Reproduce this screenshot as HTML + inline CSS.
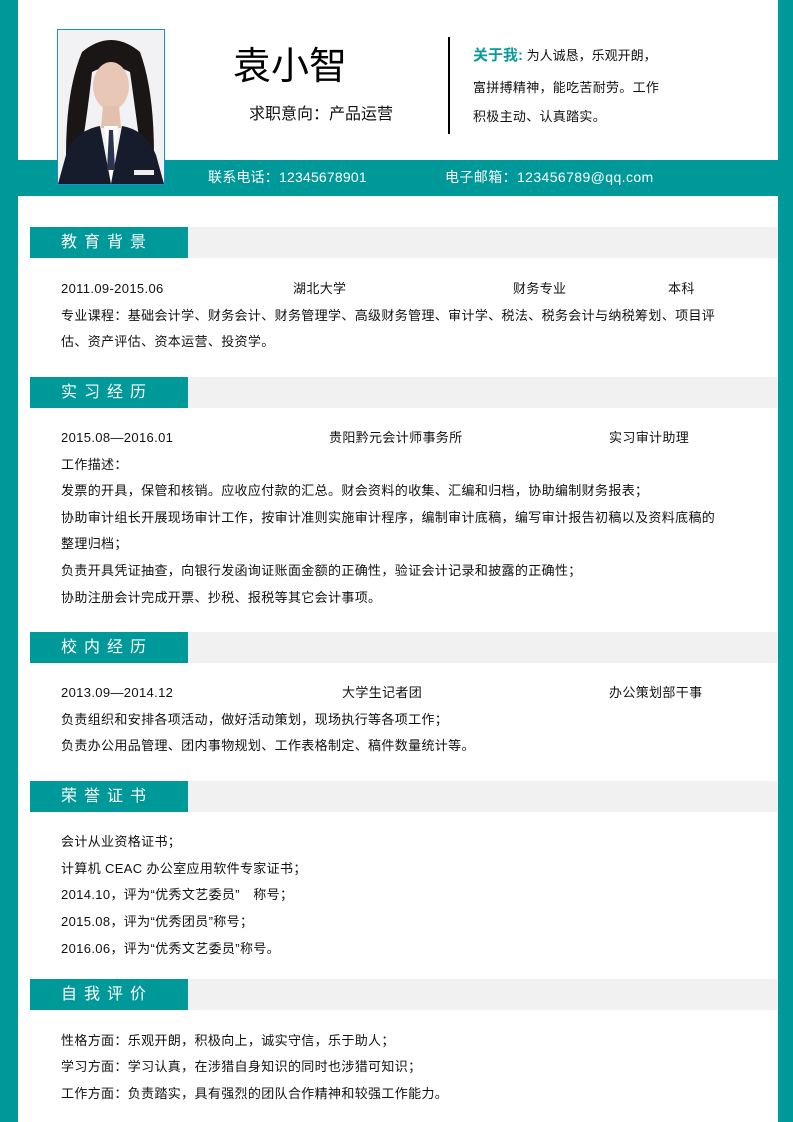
<!DOCTYPE html>
<html><head><meta charset="utf-8">
<style>
*{margin:0;padding:0;box-sizing:border-box}
body{width:793px;height:1122px;position:relative;background:#fff;font-family:"Liberation Sans","Noto Sans CJK SC",sans-serif;color:#111;overflow:hidden}
.a{position:absolute;white-space:nowrap}
.t{font-size:13px;line-height:18px;letter-spacing:0.35px}
.sec{position:absolute;left:30px;width:748px;height:31px;background:#f1f1f1}
.sec div{width:158px;height:31px;background:#009999;color:#fff;font-size:16px;line-height:31px;padding-left:31px;letter-spacing:7px}
</style></head><body>
<div class="a" style="left:0;top:0;width:18px;height:1122px;background:#009999"></div>
<div class="a" style="left:778px;top:0;width:15px;height:1122px;background:#009999"></div>
<div class="a" style="left:0;top:160px;width:793px;height:36px;background:#009999"></div>
<div class="a" style="left:57px;top:29px;width:108px;height:156px;border:1px solid #1a8fd0;background:#f2f2f4">
<svg width="106" height="154" viewBox="0 0 106 154"><path d="M24 22 Q53 -2 82 22 Q96 60 96 125 L84 130 Q76 70 72 42 Q53 32 34 42 Q30 80 22 130 L8 125 Q8 60 24 22Z" fill="#1b1616"/><ellipse cx="53" cy="56" rx="18" ry="24" fill="#e8c7b6"/><path d="M45 76 L61 76 L63 98 L43 98Z" fill="#e3bfae"/><path d="M8 125 Q18 100 42 96 L53 154 L64 96 Q88 100 98 125 L106 154 L0 154Z" fill="#161c2c"/><path d="M46 96 L53 152 L60 96Z" fill="#fff"/><path d="M51 100 L55 100 L57 140 L49 140Z" fill="#2a3550"/><rect x="76" y="140" width="20" height="5" fill="#eee"/></svg></div>
<div class="a" style="left:233px;top:42px;font-size:38px;line-height:50px;color:#000">袁小智</div>
<div class="a" style="left:249px;top:104px;font-size:16px;line-height:22px;color:#111">求职意向：产品运营</div>
<div class="a" style="left:448px;top:37px;width:2px;height:97px;background:#000"></div>
<div class="a" style="left:473px;top:46px;font-size:13px;line-height:20px"><span style="color:#0b9a9a;font-size:15px;font-weight:bold">关于我:</span> 为人诚恳，乐观开朗，</div>
<div class="a" style="left:473px;top:78px;font-size:13px;line-height:20px;letter-spacing:0.3px">富拼搏精神，能吃苦耐劳。工作</div>
<div class="a" style="left:473px;top:107px;font-size:13px;line-height:20px;letter-spacing:0.3px">积极主动、认真踏实。</div>
<div class="a" style="left:208px;top:167px;font-size:14px;line-height:20px;color:#fff;letter-spacing:0.2px">联系电话：12345678901</div>
<div class="a" style="left:445px;top:167px;font-size:14px;line-height:20px;color:#fff;letter-spacing:0.4px">电子邮箱：123456789@qq.com</div>

<div class="sec" style="top:227px"><div>教育背景</div></div>
<div class="a t" style="left:61px;top:280px">2011.09-2015.06</div>
<div class="a t" style="left:293px;top:280px">湖北大学</div>
<div class="a t" style="left:513px;top:280px">财务专业</div>
<div class="a t" style="left:668px;top:280px">本科</div>
<div class="a t" style="left:61px;top:307px">专业课程：基础会计学、财务会计、财务管理学、高级财务管理、审计学、税法、税务会计与纳税筹划、项目评</div>
<div class="a t" style="left:61px;top:333px">估、资产评估、资本运营、投资学。</div>

<div class="sec" style="top:377px"><div>实习经历</div></div>
<div class="a t" style="left:61px;top:429px">2015.08—2016.01</div>
<div class="a t" style="left:329px;top:429px">贵阳黔元会计师事务所</div>
<div class="a t" style="left:609px;top:429px">实习审计助理</div>
<div class="a t" style="left:61px;top:456px">工作描述：</div>
<div class="a t" style="left:61px;top:482px">发票的开具，保管和核销。应收应付款的汇总。财会资料的收集、汇编和归档，协助编制财务报表；</div>
<div class="a t" style="left:61px;top:509px">协助审计组长开展现场审计工作，按审计准则实施审计程序，编制审计底稿，编写审计报告初稿以及资料底稿的</div>
<div class="a t" style="left:61px;top:535px">整理归档；</div>
<div class="a t" style="left:61px;top:562px">负责开具凭证抽查，向银行发函询证账面金额的正确性，验证会计记录和披露的正确性；</div>
<div class="a t" style="left:61px;top:589px">协助注册会计完成开票、抄税、报税等其它会计事项。</div>

<div class="sec" style="top:632px"><div>校内经历</div></div>
<div class="a t" style="left:61px;top:684px">2013.09—2014.12</div>
<div class="a t" style="left:342px;top:684px">大学生记者团</div>
<div class="a t" style="left:609px;top:684px">办公策划部干事</div>
<div class="a t" style="left:61px;top:711px">负责组织和安排各项活动，做好活动策划，现场执行等各项工作；</div>
<div class="a t" style="left:61px;top:737px">负责办公用品管理、团内事物规划、工作表格制定、稿件数量统计等。</div>

<div class="sec" style="top:781px"><div>荣誉证书</div></div>
<div class="a t" style="left:61px;top:833px">会计从业资格证书；</div>
<div class="a t" style="left:61px;top:860px">计算机 CEAC 办公室应用软件专家证书；</div>
<div class="a t" style="left:61px;top:886px">2014.10，评为“优秀文艺委员”　称号；</div>
<div class="a t" style="left:61px;top:913px">2015.08，评为“优秀团员”称号；</div>
<div class="a t" style="left:61px;top:940px">2016.06，评为“优秀文艺委员”称号。</div>

<div class="sec" style="top:979px"><div>自我评价</div></div>
<div class="a t" style="left:61px;top:1032px">性格方面：乐观开朗，积极向上，诚实守信，乐于助人；</div>
<div class="a t" style="left:61px;top:1058px">学习方面：学习认真，在涉猎自身知识的同时也涉猎可知识；</div>
<div class="a t" style="left:61px;top:1085px">工作方面：负责踏实，具有强烈的团队合作精神和较强工作能力。</div>
</body></html>
